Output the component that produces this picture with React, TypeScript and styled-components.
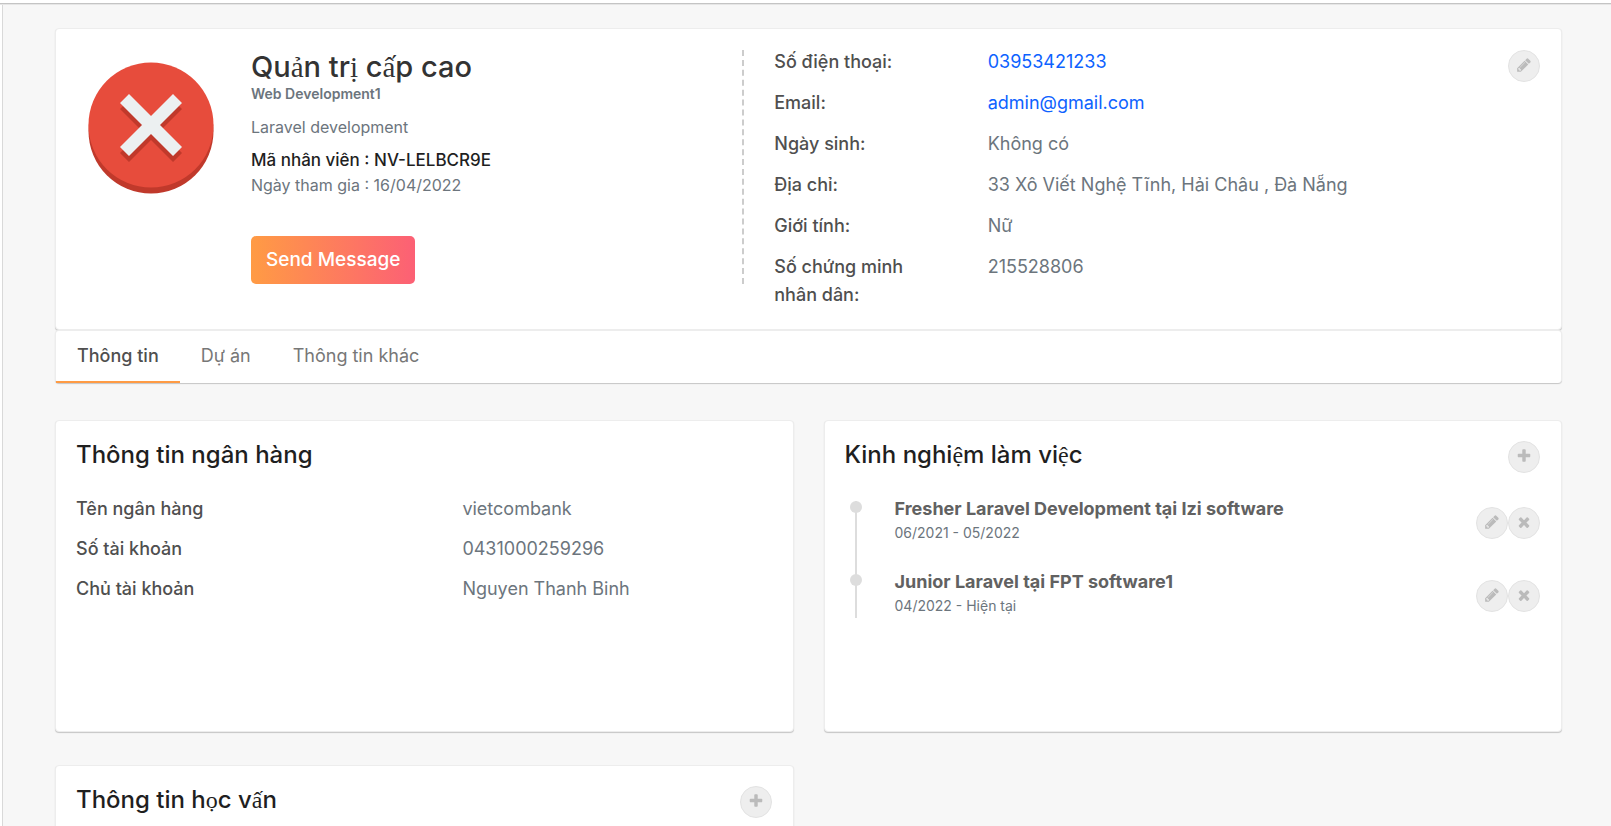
import React from "react";
import styled, { createGlobalStyle, css } from "styled-components";

const GlobalStyle = createGlobalStyle`
  *, *::before, *::after { box-sizing: border-box; }
  html, body { margin: 0; padding: 0; }
  body {
    background: #f7f7f7;
    color: #1f1f1f;
    font-family: Inter, "Liberation Sans", sans-serif;
    font-size: 18px;
    line-height: 28px;
  }
  #root { display: flex; flex-direction: column; height: 100vh; overflow: hidden; }
  h1, h2, h3, h4, p, ul, dl, dd { margin: 0; padding: 0; }
  ul { list-style: none; }
`;

const HeaderEdge = styled.header`
  flex: none;
  height: 4px;
  background: #fff;
  border-bottom: 1px solid #c4c4c4;
  box-shadow: 0 1px 0 #e6e6e6;
  z-index: 1;
`;

const Shell = styled.div`
  flex: 1;
  min-height: 0;
  display: flex;
`;

const SidebarEdge = styled.div`
  flex: none;
  width: 3px;
  background: #fff;
  border-right: 1px solid #d9d9d9;
`;

const Content = styled.main`
  flex: 1;
  min-width: 0;
  overflow: hidden;
  padding: 24px 49px 24px 52px;
`;

const Card = styled.section`
  background: #fff;
  border: 1px solid #ededed;
  border-radius: 4px;
  box-shadow: 0 1px 1px rgba(0, 0, 0, 0.2);
`;

const ProfileCard = styled(Card)`
  display: grid;
  grid-template-columns: 7fr 8fr 32px;
  align-items: start;
  padding: 19px 21px 20px 20px;
`;

const Summary = styled.div`
  display: flex;
  align-items: flex-start;
  margin-top: 2px;
  padding-left: 12px;
  border-right: 2px dashed #ccc;
`;

const Avatar = styled.svg`
  flex: none;
  display: block;
  width: 126px;
  height: 132px;
  margin: 12px 37px 0 0;
`;

const Name = styled.h1`
  color: #333;
  font-size: 29px;
  font-weight: 500;
  line-height: 34px;
`;

const Team = styled.p`
  color: #6c757d;
  font-size: 14px;
  font-weight: 600;
  line-height: 20px;
`;

const Position = styled.p`
  margin-top: 13px;
  color: #6c757d;
  font-size: 16px;
  line-height: 20px;
`;

const StaffId = styled.p`
  margin-top: 10px;
  font-size: 17px;
  font-weight: 500;
  line-height: 26px;
`;

const JoinDate = styled.p`
  color: #6c757d;
  font-size: 16px;
  line-height: 24px;
`;

const MessageButton = styled.button`
  display: block;
  height: 48px;
  margin-top: 39px;
  padding: 0 15px 2px;
  border: 0;
  border-radius: 5px;
  background: linear-gradient(to right, #ff9b44 0%, #fc6075 100%);
  color: #fff;
  font: 500 19px Inter, "Liberation Sans", sans-serif;
  cursor: pointer;
`;

const InfoList = styled.dl`
  display: flex;
  flex-direction: column;
  gap: 13px;
  padding-left: 30px;
`;

const InfoRow = styled.div`
  display: grid;
  grid-template-columns: 22% 1fr;
  column-gap: 52px;
`;

const BankList = styled(InfoList)`
  gap: 12px;
  padding-left: 0;
`;

const BankRow = styled.div`
  display: grid;
  grid-template-columns: 5fr 4fr;
`;

const Term = styled.dt`
  color: #4f4f4f;
  font-weight: 500;
`;

const Value = styled.dd`
  color: #6c757d;
`;

const Link = styled.a`
  color: #0d62ff;
  text-decoration: none;
`;

const RoundButton = styled.button<{ $lowered?: boolean }>`
  flex: none;
  display: flex;
  align-items: center;
  justify-content: center;
  width: 32px;
  height: 32px;
  padding: 0 0 3px;
  border: 1px solid #e3e3e3;
  border-radius: 50%;
  background: #eee;
  color: #bbb;
  cursor: pointer;
  ${p => p.$lowered && css`margin-top: 2px;`}

  svg { display: block; width: 16px; height: 16px; fill: currentColor; }
`;

const TabCard = styled(Card)`
  border-bottom: 0;
`;

const Tabs = styled.nav`
  display: flex;
  margin-bottom: -1px;
`;

const Tab = styled.a<{ $active?: boolean }>`
  padding: 0 21px;
  border-bottom: 2px solid ${p => (p.$active ? "#ff9b44" : "transparent")};
  color: ${p => (p.$active ? "#4f4f4f" : "#777")};
  font-weight: ${p => (p.$active ? 500 : 400)};
  line-height: 50px;
  text-decoration: none;
`;

const CardGrid = styled.div`
  display: grid;
  grid-template-columns: 1fr 1fr;
  gap: 33px 30px;
  margin-top: 38px;
`;

const DetailCard = styled(Card)`
  min-height: 312px;
  padding: 20px 21px 20px 20px;
`;

const CardHeader = styled.header`
  display: flex;
  justify-content: space-between;
  align-items: flex-start;
  min-height: 32px;
  margin-bottom: 22px;
`;

const CardTitle = styled.h2`
  font-size: 24px;
  font-weight: 500;
  line-height: 28px;
`;

const Accented = styled.span`
  font-family: "Liberation Serif", serif;
  font-weight: 400;
  line-height: 0;
`;

const Timeline = styled.ul`
  padding-left: 5px;
`;

const TimelineItem = styled.li`
  display: flex;
  align-items: flex-start;
  padding-bottom: 25px;
  position: relative;

  &:last-child { padding-bottom: 2px; }

  &::before {
    content: "";
    position: absolute;
    top: 6px;
    bottom: -6px;
    left: 5px;
    width: 2px;
    background: #ddd;
  }

  &:last-child::before { height: 44px; }
`;

const Dot = styled.span`
  flex: none;
  width: 12px;
  height: 12px;
  margin: 6px 33px 0 0;
  border-radius: 50%;
  background: #ddd;
`;

const Job = styled.div`
  flex: 1;
`;

const JobTitle = styled.h3`
  color: #616161;
  font-size: 18px;
  font-weight: 700;
  line-height: 28px;
`;

const Period = styled.p`
  color: #6c757d;
  font-size: 14px;
  line-height: 20px;
`;

const Actions = styled.div`
  display: flex;
  margin-top: 12px;
`;

const iconPaths = {
  pencil:
    "M491 1536l91-91-235-235-91 91v107h128v128h107zm523-928q0-22-22-22-10 0-17 7l-542 542q-7 7-7 17 0 22 22 22 10 0 17-7l542-542q7-7 7-17zm-54-192l416 416-832 832h-416v-416zm683 96q0 53-37 90l-166 166-416-416 166-165q36-38 90-38 53 0 91 38l235 234q37 39 37 91z",
  plus:
    "M1600 736v192q0 40-28 68t-68 28h-416v416q0 40-28 68t-68 28h-192q-40 0-68-28t-28-68v-416h-416q-40 0-68-28t-28-68v-192q0-40 28-68t68-28h416v-416q0-40 28-68t68-28h192q40 0 68 28t28 68v416h416q40 0 68 28t28 68z",
  times:
    "M1490 1322q0 40-28 68l-136 136q-28 28-68 28t-68-28l-294-294-294 294q-28 28-68 28t-68-28l-136-136q-28-28-28-68t28-68l294-294-294-294q-28-28-28-68t28-68l136-136q28-28 68-28t68 28l294 294 294-294q28-28 68-28t68 28l136 136q28 28 28 68t-28 68l-294 294 294 294q28 28 28 68z",
};

function IconButton({ icon, label, lowered }: { icon: keyof typeof iconPaths; label: string; lowered?: boolean }) {
  return (
    <RoundButton type="button" aria-label={label} $lowered={lowered}>
      <svg viewBox="0 0 1792 1792" aria-hidden="true">
        <path d={iconPaths[icon]} />
      </svg>
    </RoundButton>
  );
}

// Heading letters outside Latin-1 are set in the serif face.
function HeadingText({ children }: { children: string }) {
  return (
    <>
      {children.split(/([^\u0000-\u00ff]+)/).map((part, i) =>
        i % 2 ? <Accented key={i}>{part}</Accented> : part
      )}
    </>
  );
}

const info: { term: string; value: string; href?: string }[] = [
  { term: "Số điện thoại:", value: "03953421233", href: "tel:03953421233" },
  { term: "Email:", value: "admin@gmail.com", href: "mailto:admin@gmail.com" },
  { term: "Ngày sinh:", value: "Không có" },
  { term: "Địa chỉ:", value: "33 Xô Viết Nghệ Tĩnh, Hải Châu , Đà Nẵng" },
  { term: "Giới tính:", value: "Nữ" },
  { term: "Số chứng minh nhân dân:", value: "215528806" },
];

const bank = [
  { term: "Tên ngân hàng", value: "vietcombank" },
  { term: "Số tài khoản", value: "0431000259296" },
  { term: "Chủ tài khoản", value: "Nguyen Thanh Binh" },
];

const jobs = [
  { title: "Fresher Laravel Development tại Izi software", period: "06/2021 - 05/2022" },
  { title: "Junior Laravel tại FPT software1", period: "04/2022 - Hiện tại" },
];

const tabs = ["Thông tin", "Dự án", "Thông tin khác"];

export default function App() {
  return (
    <>
      <GlobalStyle />
      <HeaderEdge />
      <Shell>
        <SidebarEdge />
        <Content>
          <ProfileCard>
            <Summary>
              <Avatar viewBox="0 0 126 132" aria-hidden="true">
                <circle cx="63" cy="69" r="62.5" fill="#c0392b" />
                <circle cx="63" cy="63" r="62.5" fill="#e74c3c" />
                <path
                  transform="translate(0 6)"
                  fill="#c0392b"
                  d="M41 32L63 54L85 32L94 41L72 63L94 85L85 94L63 72L41 94L32 85L54 63L32 41Z"
                />
                <path
                  fill="#ecf0f1"
                  d="M41 32L63 54L85 32L94 41L72 63L94 85L85 94L63 72L41 94L32 85L54 63L32 41Z"
                />
              </Avatar>
              <div>
                <Name><HeadingText>Quản trị cấp cao</HeadingText></Name>
                <Team>Web Development1</Team>
                <Position>Laravel development</Position>
                <StaffId>Mã nhân viên : NV-LELBCR9E</StaffId>
                <JoinDate>Ngày tham gia : 16/04/2022</JoinDate>
                <MessageButton type="button">Send Message</MessageButton>
              </div>
            </Summary>
            <InfoList>
              {info.map(({ term, value, href }) => (
                <InfoRow key={term}>
                  <Term>{term}</Term>
                  <Value>{href ? <Link href={href}>{value}</Link> : value}</Value>
                </InfoRow>
              ))}
            </InfoList>
            <IconButton icon="pencil" label="Edit profile" lowered />
          </ProfileCard>

          <TabCard>
            <Tabs>
              {tabs.map((tab, i) => (
                <Tab key={tab} href="#" $active={i === 0}>{tab}</Tab>
              ))}
            </Tabs>
          </TabCard>

          <CardGrid>
            <DetailCard>
              <CardHeader>
                <CardTitle>Thông tin ngân hàng</CardTitle>
              </CardHeader>
              <BankList>
                {bank.map(({ term, value }) => (
                  <BankRow key={term}>
                    <Term>{term}</Term>
                    <Value>{value}</Value>
                  </BankRow>
                ))}
              </BankList>
            </DetailCard>

            <DetailCard>
              <CardHeader>
                <CardTitle><HeadingText>Kinh nghiệm làm việc</HeadingText></CardTitle>
                <IconButton icon="plus" label="Add experience" />
              </CardHeader>
              <Timeline>
                {jobs.map(({ title, period }) => (
                  <TimelineItem key={title}>
                    <Dot />
                    <Job>
                      <JobTitle>{title}</JobTitle>
                      <Period>{period}</Period>
                    </Job>
                    <Actions>
                      <IconButton icon="pencil" label={`Edit ${title}`} />
                      <IconButton icon="times" label={`Remove ${title}`} />
                    </Actions>
                  </TimelineItem>
                ))}
              </Timeline>
            </DetailCard>

            <DetailCard>
              <CardHeader>
                <CardTitle><HeadingText>Thông tin học vấn</HeadingText></CardTitle>
                <IconButton icon="plus" label="Add education" />
              </CardHeader>
            </DetailCard>
          </CardGrid>
        </Content>
      </Shell>
    </>
  );
}
